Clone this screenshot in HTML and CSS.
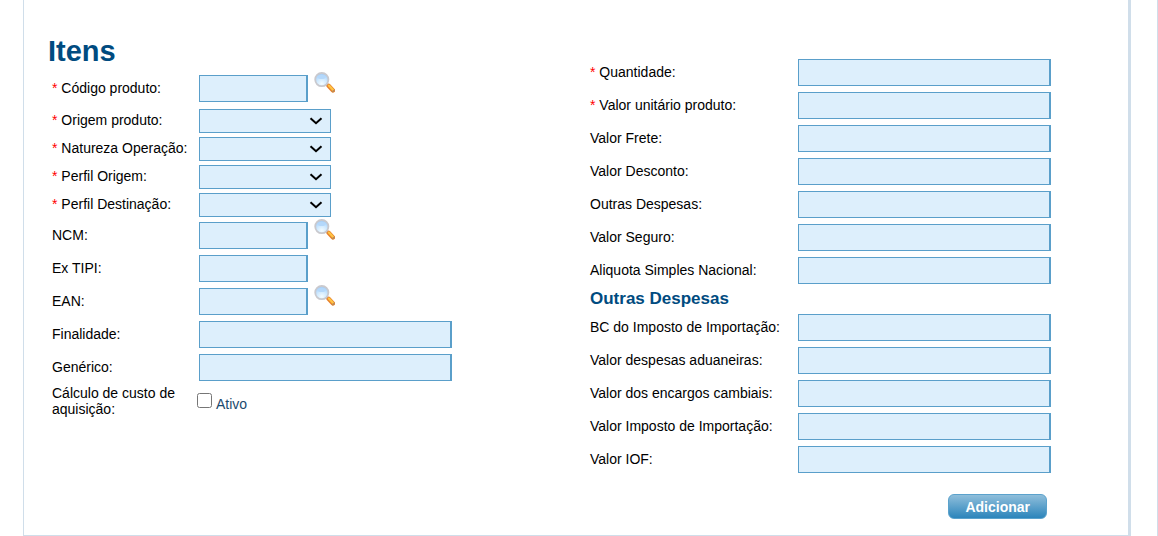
FILE: index.html
```html
<!DOCTYPE html>
<html lang="pt-BR">
<head>
  <meta charset="UTF-8" />
  <meta name="viewport" content="width=device-width, initial-scale=1.0" />
  <title>Itens</title>
  <link rel="stylesheet" href="styles.css">
</head>
<body>
<svg width="0" height="0" class="defs">
  <defs>
    <radialGradient id="glass" cx="50%" cy="80%" r="75%">
      <stop offset="0" stop-color="#f4fcff" />
      <stop offset="0.5" stop-color="#cfe9fe" />
      <stop offset="1" stop-color="#9fcdfa" />
    </radialGradient>
    <symbol id="lupa" viewBox="0 0 21 21">
      <path d="M12 11.6l2.4 2.2" stroke="#a9a9ad" stroke-width="2.6" />
      <path d="M14.6 13.8l4.4 4.6" stroke="#e8822c" stroke-width="4.4" stroke-linecap="round" />
      <path d="M14.9 13.6l4.2 4.4" stroke="#ffc544" stroke-width="2.2" stroke-linecap="round" />
      <path d="M18.6 19.6l1.6-1.4" stroke="#b98a5a" stroke-width="1.4" stroke-linecap="round" />
      <circle cx="7.8" cy="7.6" r="6.6" fill="url(#glass)" stroke="#c9c9ce" stroke-width="1.8" />
      <ellipse cx="7.6" cy="5" rx="4" ry="2.1" fill="#b4d8fb" />
    </symbol>
  </defs>
</svg>
<div class="page">
  <form class="panel">
    <div class="column">
      <h1>Itens</h1>
      <div class="fields fields-left">
        <div class="row">
          <label for="codigo"><span class="req">*</span> Código produto:</label>
          <input type="text" id="codigo" class="short" />
          <button type="button" class="search" aria-label="Pesquisar produto"><svg width="21" height="21"><use href="#lupa" /></svg></button>
        </div>
        <div class="selects">
          <div class="row">
            <label for="origem"><span class="req">*</span> Origem produto:</label>
            <select id="origem"><option></option></select>
          </div>
          <div class="row">
            <label for="natureza"><span class="req">*</span> Natureza Operação:</label>
            <select id="natureza"><option></option></select>
          </div>
          <div class="row">
            <label for="perfilOrigem"><span class="req">*</span> Perfil Origem:</label>
            <select id="perfilOrigem"><option></option></select>
          </div>
          <div class="row">
            <label for="perfilDestino"><span class="req">*</span> Perfil Destinação:</label>
            <select id="perfilDestino"><option></option></select>
          </div>
        </div>
        <div class="row">
          <label for="ncm">NCM:</label>
          <input type="text" id="ncm" class="short" />
          <button type="button" class="search" aria-label="Pesquisar NCM"><svg width="21" height="21"><use href="#lupa" /></svg></button>
        </div>
        <div class="row">
          <label for="extipi">Ex TIPI:</label>
          <input type="text" id="extipi" class="short" />
        </div>
        <div class="row">
          <label for="ean">EAN:</label>
          <input type="text" id="ean" class="short" />
          <button type="button" class="search" aria-label="Pesquisar EAN"><svg width="21" height="21"><use href="#lupa" /></svg></button>
        </div>
        <div class="row">
          <label for="finalidade">Finalidade:</label>
          <input type="text" id="finalidade" />
        </div>
        <div class="row">
          <label for="generico">Genérico:</label>
          <input type="text" id="generico" />
        </div>
        <div class="row">
          <span class="caption">Cálculo de custo de aquisição:</span>
          <input type="checkbox" id="ativo" />
          <label for="ativo" class="check-label">Ativo</label>
        </div>
      </div>
    </div>
    <div class="column column-right">
      <div class="fields fields-right">
        <div class="row">
          <label for="quantidade"><span class="req">*</span> Quantidade:</label>
          <input type="text" id="quantidade" />
        </div>
        <div class="row">
          <label for="valorUnitario"><span class="req">*</span> Valor unitário produto:</label>
          <input type="text" id="valorUnitario" />
        </div>
        <div class="row">
          <label for="frete">Valor Frete:</label>
          <input type="text" id="frete" />
        </div>
        <div class="row">
          <label for="desconto">Valor Desconto:</label>
          <input type="text" id="desconto" />
        </div>
        <div class="row">
          <label for="outras">Outras Despesas:</label>
          <input type="text" id="outras" />
        </div>
        <div class="row">
          <label for="seguro">Valor Seguro:</label>
          <input type="text" id="seguro" />
        </div>
        <div class="row">
          <label for="aliquota">Aliquota Simples Nacional:</label>
          <input type="text" id="aliquota" />
        </div>
        <h2>Outras Despesas</h2>
        <div class="row">
          <label for="bcImposto">BC do Imposto de Importação:</label>
          <input type="text" id="bcImposto" />
        </div>
        <div class="row">
          <label for="aduaneiras">Valor despesas aduaneiras:</label>
          <input type="text" id="aduaneiras" />
        </div>
        <div class="row">
          <label for="encargos">Valor dos encargos cambiais:</label>
          <input type="text" id="encargos" />
        </div>
        <div class="row">
          <label for="imposto">Valor Imposto de Importação:</label>
          <input type="text" id="imposto" />
        </div>
        <div class="row">
          <label for="iof">Valor IOF:</label>
          <input type="text" id="iof" />
        </div>
        <div class="actions">
          <button type="button" class="btn">Adicionar</button>
        </div>
      </div>
    </div>
  </form>
</div>
</body>
</html>
```
FILE: styles.css
```css
* {
  box-sizing: border-box;
  margin: 0;
  padding: 0;
}
body {
  background: #fff;
  color: #000;
  font: 14px/16px Arial, "Liberation Sans", sans-serif;
}
.defs {
  display: block;
}
.page {
  padding: 0 26px 0 23px;
  border-right: 1px solid #d0deea;
}
.panel {
  display: grid;
  grid-template-columns: 1fr 1fr;
  column-gap: 4px;
  padding: 34px 0 16px 24px;
  border: 1px solid #d0deea;
  border-top: 0;
  border-right-width: 3px;
}
.column-right {
  padding-top: 22px;
}
h1 {
  color: #004b80;
  font-size: 29px;
  line-height: 34px;
}
h2 {
  color: #004b80;
  font-size: 17px;
  line-height: 24px;
}
.fields-left {
  padding: 4px 0 0 4px;
}
.fields-right {
  width: max-content;
}

/* rows */
.row {
  display: flex;
  align-items: center;
  min-height: 33px;
}
.row label,
.caption {
  flex: none;
  width: 145px;
}
.row label {
  padding-bottom: 2px;
}
.fields-right .row label {
  width: 206px;
}
.selects {
  padding-top: 2px;
}
.selects .row {
  min-height: 28px;
}
.req {
  color: #f00;
}

/* controls */
input[type="text"],
select {
  margin-left: 2px;
  background-color: #ddeffc;
  border: 1px solid #5a9fca;
  border-radius: 0;
  font: inherit;
}
input[type="text"] {
  width: 253px;
  height: 27px;
  padding: 0 4px;
  border-right-width: 2px;
}
input.short {
  width: 109px;
}
select {
  width: 132px;
  height: 24px;
  appearance: none;
  background-image: url("data:image/svg+xml,%3Csvg xmlns='http://www.w3.org/2000/svg' width='14' height='8'%3E%3Cpath d='M1.5 1.2L7 6.2l5.5-5' fill='none' stroke='%23000' stroke-width='2'/%3E%3C/svg%3E");
  background-repeat: no-repeat;
  background-position: right 7px center;
}
.search {
  align-self: flex-start;
  margin-left: 6px;
  background: none;
  border: 0;
  cursor: pointer;
}
.search svg {
  display: block;
}
input[type="checkbox"] {
  width: 15px;
  height: 15px;
}
.row .check-label {
  width: auto;
  padding: 6px 0 0 4px;
  color: #1b4a6e;
}
.actions {
  display: flex;
  justify-content: flex-end;
  padding: 18px 4px 0 0;
}
.btn {
  height: 25px;
  padding: 0 16px;
  background: linear-gradient(#8fbedb, #2c85bb);
  border: 1px solid #5ba2cc;
  border-radius: 6px;
  color: #fff;
  font: bold 14px/16px Arial, "Liberation Sans", sans-serif;
  cursor: pointer;
}
```
